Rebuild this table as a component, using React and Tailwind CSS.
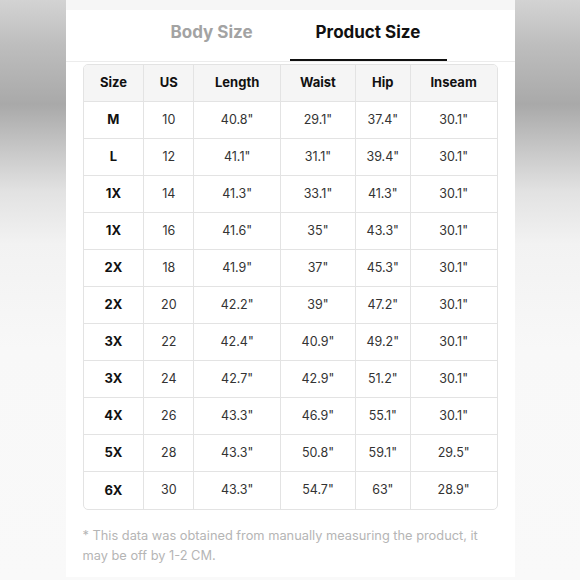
import React from "react";

const rows = [
  ["M", "10", '40.8"', '29.1"', '37.4"', '30.1"'],
  ["L", "12", '41.1"', '31.1"', '39.4"', '30.1"'],
  ["1X", "14", '41.3"', '33.1"', '41.3"', '30.1"'],
  ["1X", "16", '41.6"', '35"', '43.3"', '30.1"'],
  ["2X", "18", '41.9"', '37"', '45.3"', '30.1"'],
  ["2X", "20", '42.2"', '39"', '47.2"', '30.1"'],
  ["3X", "22", '42.4"', '40.9"', '49.2"', '30.1"'],
  ["3X", "24", '42.7"', '42.9"', '51.2"', '30.1"'],
  ["4X", "26", '43.3"', '46.9"', '55.1"', '30.1"'],
  ["5X", "28", '43.3"', '50.8"', '59.1"', '29.5"'],
  ["6X", "30", '43.3"', '54.7"', '63"', '28.9"'],
];

const headers = ["Size", "US", "Length", "Waist", "Hip", "Inseam"];
const widths = ["w-[61px]", "w-[50px]", "w-[87px]", "w-[75px]", "w-[55px]", "w-[86px]"];

export default function App() {
  return (
    <div
      className="w-[580px] h-[580px] flex justify-center bg-[linear-gradient(to_bottom,#d3d3d3_0%,#bdbdbd_8%,#a9a9a9_18%,#c8c8c8_26%,#e2e2e2_33%,#f2f2f2_42%,#f8f8f8_60%,#f9f9f9_100%)]"
      style={{ fontFamily: "Inter, 'Noto Sans', sans-serif" }}
    >
      <div className="w-[449px] h-[577px] bg-white flex flex-col">
        <div className="h-[10px] bg-[#f6f6f6]" />
        <div className="h-[52px] flex justify-center border-b border-[#ececec]">
          <div className="w-[156px] flex items-center justify-center pb-[6px] text-[17px] font-bold text-[#a3a3a3]">
            Body Size
          </div>
          <div className="w-[157px] flex items-center justify-center pb-[4px] text-[17px] font-bold text-[#111] border-b-2 border-[#111]">
            Product Size
          </div>
        </div>
        <div className="px-[17px] pt-[2px]">
          <div className="border border-[#e3e3e3] rounded-[5px] overflow-hidden">
            <div className="flex h-[37px] bg-[#f5f5f5] border-b border-[#e3e3e3]">
              {headers.map((h, i) => (
                <div
                  key={h}
                  className={`${widths[i]} flex items-center justify-center text-[13px] font-bold text-[#111] ${i < 5 ? "border-r border-[#e3e3e3]" : ""}`}
                >
                  {h}
                </div>
              ))}
            </div>
            {rows.map((r, ri) => (
              <div
                key={ri}
                className={`flex h-[37px] ${ri < rows.length - 1 ? "border-b border-[#e3e3e3]" : ""}`}
              >
                {r.map((c, i) => (
                  <div
                    key={i}
                    className={`${widths[i]} flex items-center justify-center ${i === 0 ? "text-[13px] font-bold text-[#111]" : "text-[12.5px] text-[#333]"} ${i < 5 ? "border-r border-[#e3e3e3]" : ""}`}
                  >
                    {c}
                  </div>
                ))}
              </div>
            ))}
          </div>
          <p className="mt-[16px] text-[12.8px] leading-[20px] text-[#b5b5b5]">
            * This data was obtained from manually measuring the product, it may be off by 1-2 CM.
          </p>
        </div>
      </div>
    </div>
  );
}
